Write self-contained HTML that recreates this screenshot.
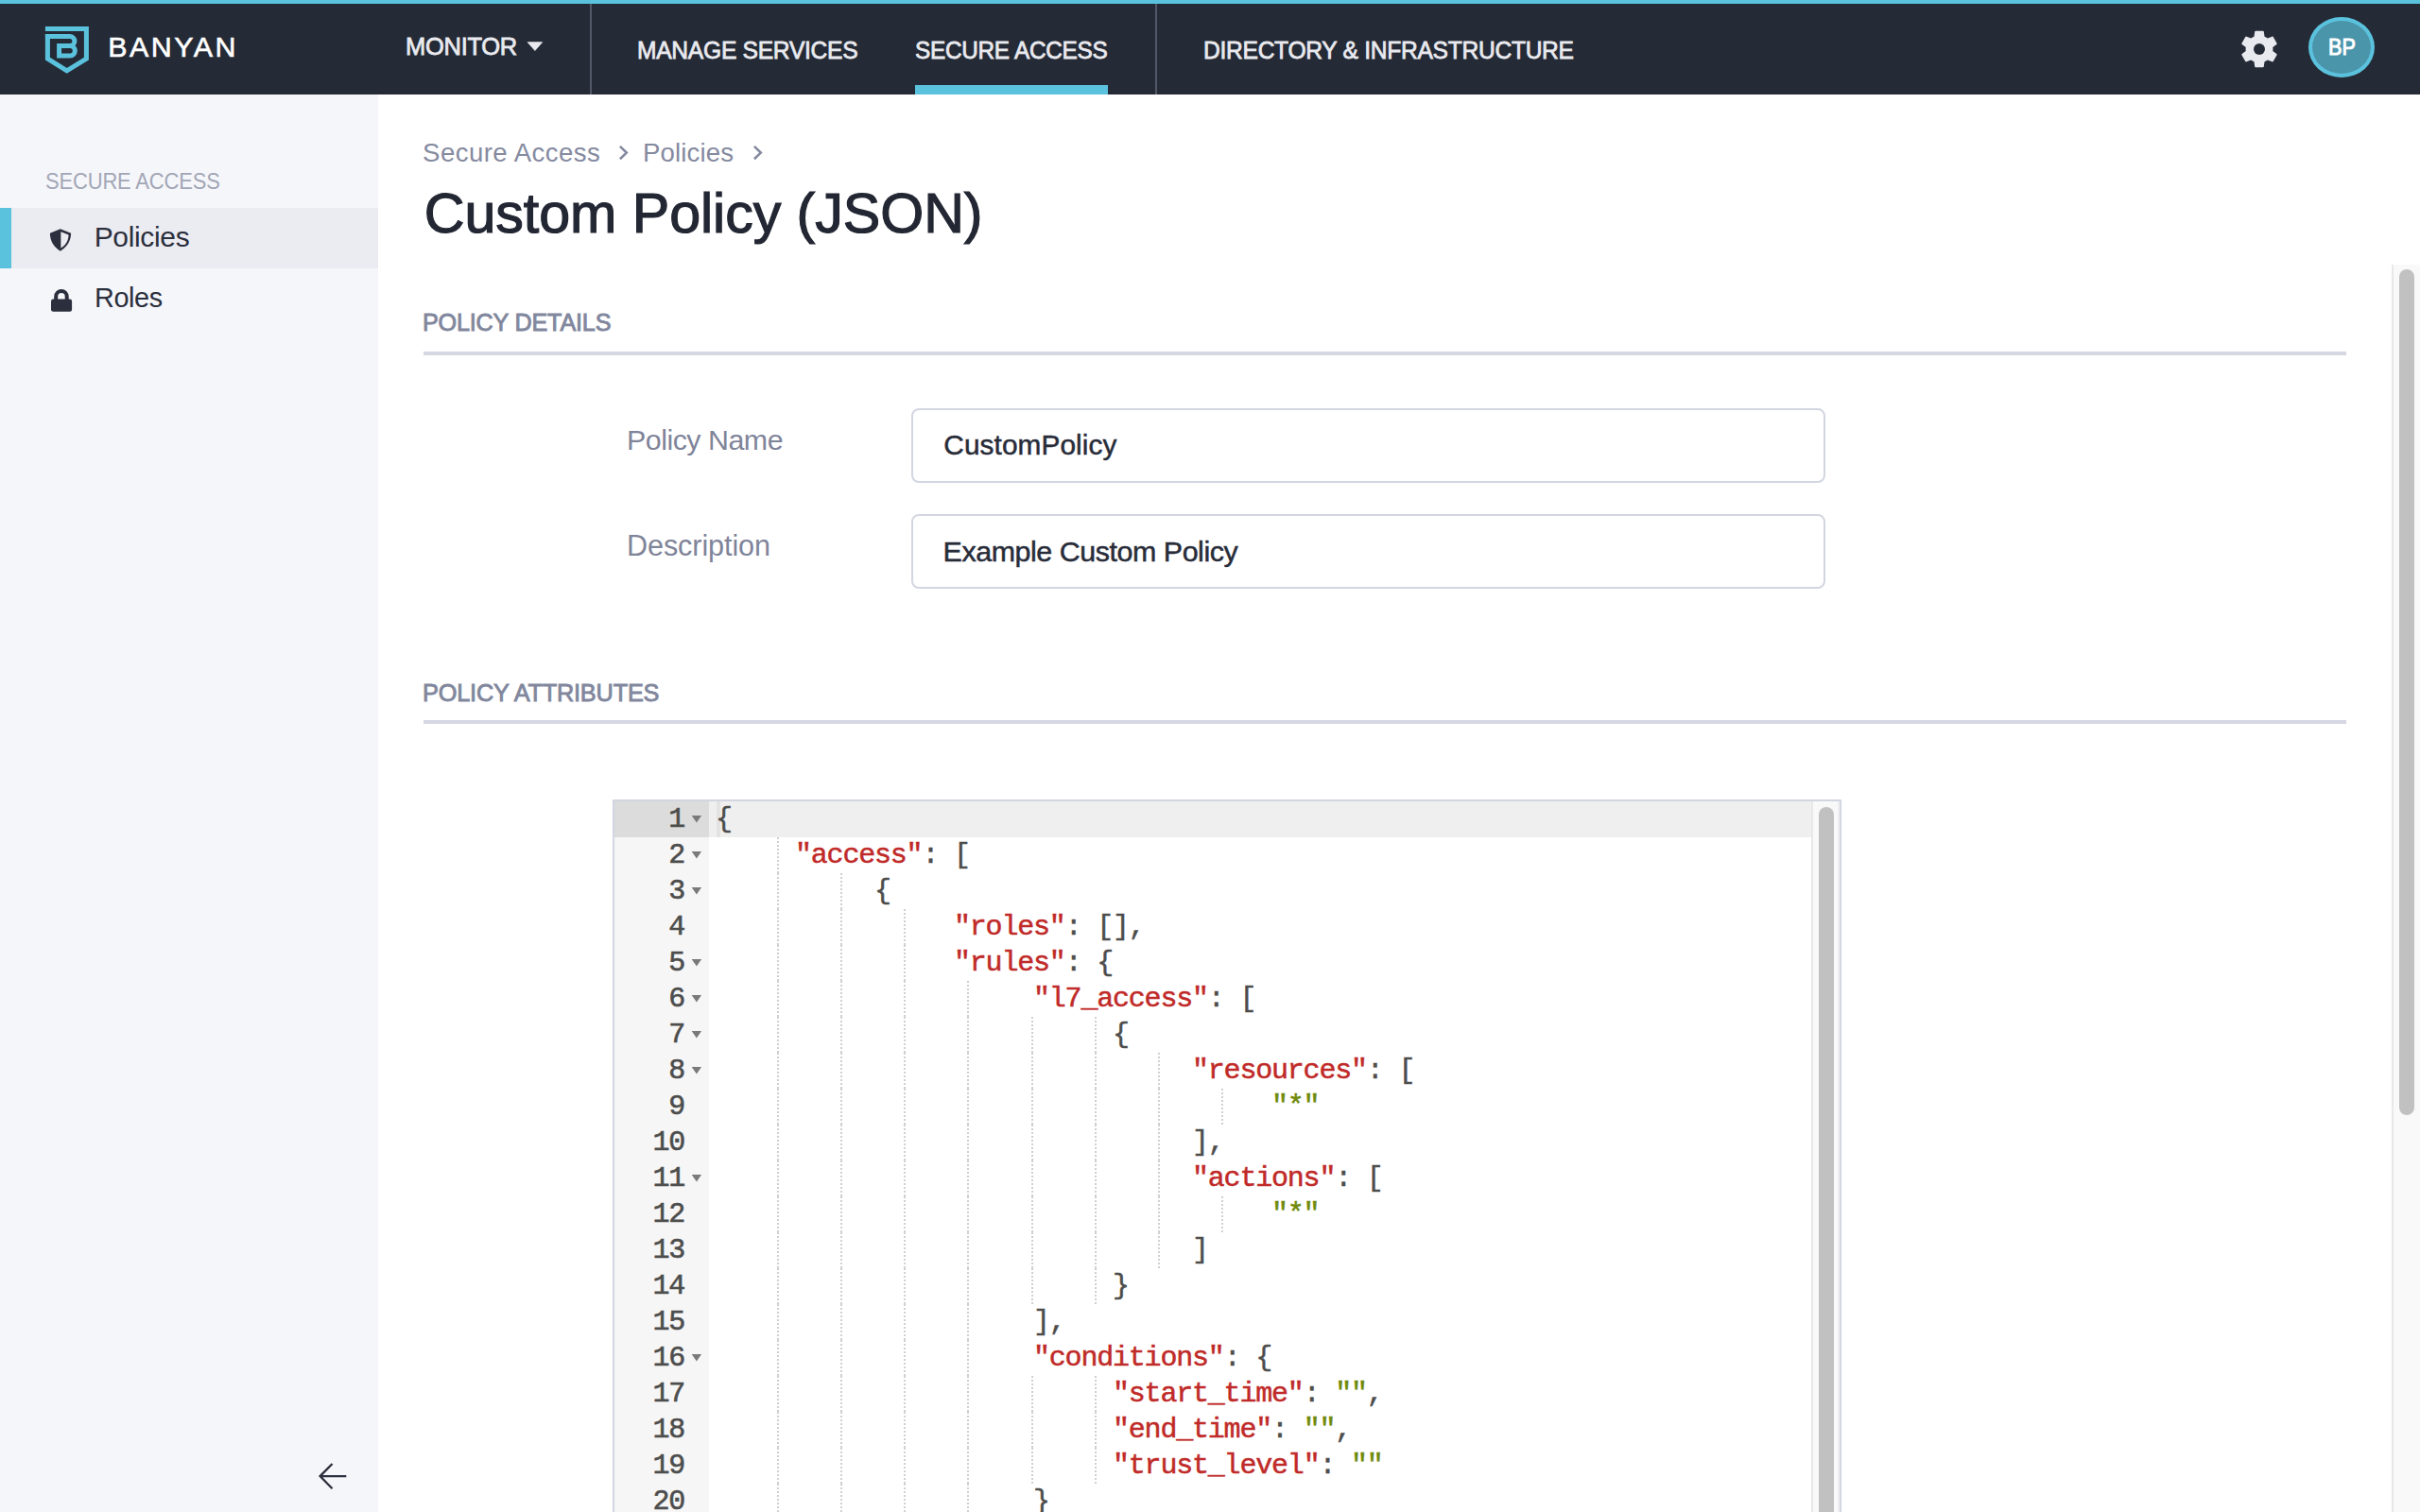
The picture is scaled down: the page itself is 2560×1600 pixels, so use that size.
<!DOCTYPE html><html><head><meta charset="utf-8"><style>
html,body{margin:0;padding:0;width:2560px;height:1600px;overflow:hidden;background:#fff}
.t{position:absolute;white-space:pre;font-family:"Liberation Sans",sans-serif}
.cl{position:absolute;height:38px;line-height:38px;white-space:pre;font-family:"Liberation Mono",monospace;font-size:30px;letter-spacing:-1.2px;color:#4d4d4c;-webkit-text-stroke:0.5px currentColor}
.gn{position:absolute;left:650px;width:74px;text-align:right;height:38px;line-height:38px;font-family:"Liberation Mono",monospace;font-size:30px;letter-spacing:-1.2px;color:#4d4d4c;-webkit-text-stroke:0.6px #4d4d4c}
.g{position:absolute;width:2px;height:38px;background:repeating-linear-gradient(to bottom,#d0d0d0 0,#d0d0d0 2px,transparent 2px,transparent 4px)}
</style></head><body>
<div style="position:absolute;left:0px;top:0px;width:2560px;height:4px;background:#5bc2de;"></div>
<div style="position:absolute;left:0px;top:4px;width:2560px;height:96px;background:#252b36;"></div>
<div style="position:absolute;left:624px;top:4px;width:2px;height:96px;background:#525868;"></div>
<div style="position:absolute;left:1222px;top:4px;width:2px;height:96px;background:#525868;"></div>
<div style="position:absolute;left:968px;top:90px;width:204px;height:10px;background:#5bc2de;"></div>
<svg style="position:absolute;left:0;top:0" width="120" height="100" viewBox="0 0 120 100">
<path d="M47.9,30.4 H91.4 V62.2 L70.7,74.9 L50.4,62.2 V35.9" fill="none" stroke="#5bc2de" stroke-width="5" stroke-miterlimit="10"/>
<path d="M47.9,38.55 H73.9 A5,5 0 0 1 73.9,48.55 H62.6 M62.6,48.55 H74.1 A5.175,5.175 0 0 1 74.1,58.9 H62.6 Z" fill="none" stroke="#5bc2de" stroke-width="5" stroke-miterlimit="10"/>
</svg>
<div class="t" style="left:114.2px;top:33.77px;font-size:30.4px;line-height:30.4px;font-weight:400;letter-spacing:2.5px;color:#ffffff;-webkit-text-stroke:0.6px #ffffff;">BANYAN</div>
<div class="t" style="left:428.7px;top:35.58px;font-size:26.7px;line-height:26.7px;font-weight:400;letter-spacing:-0.3px;color:#e9eaef;-webkit-text-stroke:0.8px #e9eaef;transform:scaleX(0.9555);transform-origin:0 0;">MONITOR</div>
<div class="t" style="left:674.3px;top:39.58px;font-size:26.6px;line-height:26.6px;font-weight:400;letter-spacing:-0.3px;color:#e9eaef;-webkit-text-stroke:0.8px #e9eaef;transform:scaleX(0.9256);transform-origin:0 0;">MANAGE SERVICES</div>
<div class="t" style="left:968.1px;top:39.73px;font-size:26.6px;line-height:26.6px;font-weight:400;letter-spacing:-0.3px;color:#e9eaef;-webkit-text-stroke:0.8px #e9eaef;transform:scaleX(0.9155);transform-origin:0 0;">SECURE ACCESS</div>
<div class="t" style="left:1273.3px;top:39.73px;font-size:26.6px;line-height:26.6px;font-weight:400;letter-spacing:-0.3px;color:#e9eaef;-webkit-text-stroke:0.8px #e9eaef;transform:scaleX(0.9246);transform-origin:0 0;">DIRECTORY &amp; INFRASTRUCTURE</div>
<svg style="position:absolute;left:556px;top:42px" width="20" height="14" viewBox="0 0 20 14"><path d="M2.2,2.7 H17.6 L9.9,11.5 Z" fill="#e9eaef" stroke="#e9eaef" stroke-width="0.8" stroke-linejoin="round"/></svg>
<svg style="position:absolute;left:2366px;top:28px" width="48" height="48" viewBox="0 0 24 24"><path fill="#e9eaef" d="M19.14,12.94c0.04-0.3,0.06-0.61,0.06-0.94c0-0.32-0.02-0.64-0.07-0.94l2.03-1.58c0.18-0.14,0.23-0.41,0.12-0.61 l-1.92-3.32c-0.12-0.22-0.37-0.29-0.59-0.22l-2.39,0.96c-0.5-0.38-1.03-0.7-1.62-0.94L14.4,2.81c-0.04-0.24-0.24-0.41-0.48-0.41 h-3.84c-0.24,0-0.43,0.17-0.47,0.41L9.25,5.35C8.66,5.59,8.12,5.92,7.63,6.29L5.24,5.33c-0.22-0.08-0.47,0-0.59,0.22L2.74,8.87 C2.62,9.08,2.66,9.34,2.86,9.48l2.03,1.58C4.84,11.36,4.8,11.69,4.8,12s0.02,0.64,0.07,0.94l-2.03,1.58 c-0.18,0.14-0.23,0.41-0.12,0.61l1.92,3.32c0.12,0.22,0.37,0.29,0.59,0.22l2.39-0.96c0.5,0.38,1.03,0.7,1.62,0.94l0.36,2.54 c0.05,0.24,0.24,0.41,0.48,0.41h3.84c0.24,0,0.44-0.17,0.47-0.41l0.36-2.54c0.59-0.24,1.13-0.56,1.62-0.94l2.39,0.96 c0.22,0.08,0.47,0,0.59-0.22l1.92-3.32c0.12-0.22,0.07-0.47-0.12-0.61L19.14,12.94z"/><circle cx="12" cy="12" r="3" fill="#252b36"/></svg>
<div style="position:absolute;left:2442px;top:18px;width:62px;height:56px;border:4px solid #5bc2de;border-radius:50%;background:#4b95ab"></div>
<div class="t" style="left:2462.7px;top:38.44px;font-size:24.4px;line-height:24.4px;font-weight:400;letter-spacing:0.0px;color:#ffffff;-webkit-text-stroke:1.0px #ffffff;transform:scaleX(0.8874);transform-origin:0 0;">BP</div>
<div style="position:absolute;left:0px;top:100px;width:400px;height:1500px;background:#f5f6fa;"></div>
<div class="t" style="left:47.9px;top:180.89px;font-size:23.5px;line-height:23.5px;font-weight:400;letter-spacing:-0.2px;color:#a2a6b6;transform:scaleX(0.9364);transform-origin:0 0;">SECURE ACCESS</div>
<div style="position:absolute;left:0px;top:220px;width:400px;height:64px;background:#ebecf1;"></div>
<div style="position:absolute;left:0px;top:220px;width:12px;height:64px;background:#5bc2de;"></div>
<svg style="position:absolute;left:40px;top:230px" width="50" height="110" viewBox="40 230 50 110">
<path d="M63.8,242.2 L52.9,246.7 C52.9,254.5 56.5,261.5 63.8,265.7 C71.1,261.5 75.1,254.5 75.1,246.7 Z" fill="#2b2f3d"/>
<path d="M64.4,245.2 L72.6,248.5 C72.3,254.5 69.8,259.3 64.4,262.6 Z" fill="#ebecf1"/>
<rect x="54" y="316.6" width="22.1" height="13.2" rx="2.3" fill="#2b2f3d"/>
<path d="M59.2,317.5 V313.75 A5.75,5.75 0 0 1 70.7,313.75 V317.5" fill="none" stroke="#2b2f3d" stroke-width="4"/>
</svg>
<div class="t" style="left:99.7px;top:236.38px;font-size:30.0px;line-height:30.0px;font-weight:400;letter-spacing:-0.342px;color:#2b2f3d;">Policies</div>
<div class="t" style="left:99.7px;top:300.43px;font-size:30.0px;line-height:30.0px;font-weight:400;letter-spacing:-0.4px;color:#2b2f3d;transform:scaleX(0.9612);transform-origin:0 0;">Roles</div>
<svg style="position:absolute;left:330px;top:1540px" width="44" height="44" viewBox="330 1540 44 44"><path d="M366.3,1562.1 H339 M351.5,1549 L338.6,1562.1 L351.5,1575.2" fill="none" stroke="#2b2f3d" stroke-width="2.3" stroke-linecap="butt"/></svg>
<div class="t" style="left:447.1px;top:148.43px;font-size:27.6px;line-height:27.6px;font-weight:400;letter-spacing:0.425px;color:#858a9f;">Secure Access</div>
<div class="t" style="left:679.9px;top:148.43px;font-size:27.6px;line-height:27.6px;font-weight:400;letter-spacing:0.157px;color:#858a9f;">Policies</div>
<svg style="position:absolute;left:652px;top:150px" width="16" height="24" viewBox="652 150 16 24"><path d="M655.9,154.9 L662.8,161.6 L655.9,168.3" fill="none" stroke="#858a9f" stroke-width="2.6"/></svg>
<svg style="position:absolute;left:794.1px;top:150px" width="16" height="24" viewBox="794.1 150 16 24"><path d="M798.0,154.9 L804.9,161.6 L798.0,168.3" fill="none" stroke="#858a9f" stroke-width="2.6"/></svg>
<div class="t" style="left:448.8px;top:195.75px;font-size:59.2px;line-height:59.2px;font-weight:400;letter-spacing:-0.063px;color:#232733;-webkit-text-stroke:1.2px #232733;">Custom Policy (JSON)</div>
<div class="t" style="left:447.0px;top:327.68px;font-size:26.5px;line-height:26.5px;font-weight:400;letter-spacing:-0.2px;color:#81879d;-webkit-text-stroke:0.9px #81879d;transform:scaleX(0.9498);transform-origin:0 0;">POLICY DETAILS</div>
<div style="position:absolute;left:448px;top:372px;width:2034px;height:4px;background:#d5d8e3;"></div>
<div class="t" style="left:663.0px;top:450.27px;font-size:30.4px;line-height:30.4px;font-weight:400;letter-spacing:-0.5px;color:#7f8499;">Policy Name</div>
<div class="t" style="left:663.0px;top:562.07px;font-size:30.6px;line-height:30.6px;font-weight:400;letter-spacing:-0.1px;color:#7f8499;">Description</div>
<div style="position:absolute;left:964px;top:432px;width:967px;height:79px;background:#fff;box-sizing:border-box;border:2px solid #d3d6e1;border-radius:8px;"></div>
<div style="position:absolute;left:964px;top:544px;width:967px;height:79px;background:#fff;box-sizing:border-box;border:2px solid #d3d6e1;border-radius:8px;"></div>
<div class="t" style="left:998.3px;top:456.48px;font-size:29.8px;line-height:29.8px;font-weight:400;letter-spacing:0.081px;color:#282c39;-webkit-text-stroke:0.5px #282c39;">CustomPolicy</div>
<div class="t" style="left:997.6px;top:568.17px;font-size:30.4px;line-height:30.4px;font-weight:400;letter-spacing:-0.44px;color:#282c39;-webkit-text-stroke:0.5px #282c39;">Example Custom Policy</div>
<div class="t" style="left:446.6px;top:719.78px;font-size:26.5px;line-height:26.5px;font-weight:400;letter-spacing:-0.2px;color:#81879d;-webkit-text-stroke:0.9px #81879d;transform:scaleX(0.9546);transform-origin:0 0;">POLICY ATTRIBUTES</div>
<div style="position:absolute;left:448px;top:762px;width:2034px;height:4px;background:#d5d8e3;"></div>
<div style="position:absolute;left:2530px;top:280px;width:30px;height:1320px;background:#f9f9f9;box-sizing:border-box;border-left:2px solid #e8e8e8;"></div>
<div style="position:absolute;left:2538px;top:285px;width:16px;height:895px;background:#c1c1c1;border-radius:8px;"></div>
<div style="position:absolute;left:648px;top:846px;width:1300px;height:800px;background:#fff;box-sizing:border-box;border:2px solid #d3d6e1;"></div>
<div style="position:absolute;left:650px;top:848px;width:100px;height:760px;background:#f6f6f6;"></div>
<div style="position:absolute;left:650px;top:848px;width:100px;height:38px;background:#dcdcdc;"></div>
<div style="position:absolute;left:750px;top:848px;width:1166px;height:38px;background:#efefef;"></div>
<div style="position:absolute;left:758px;top:848px;width:4px;height:38px;background:#e3e3e3;"></div>
<div style="position:absolute;left:1916px;top:848px;width:30px;height:760px;background:#f9f9f9;box-sizing:border-box;border-left:2px solid #e8e8e8;border-right:2px solid #f0f0f0;"></div>
<div style="position:absolute;left:1924px;top:854px;width:16px;height:760px;background:#c1c1c1;border-radius:8px;"></div>
<div class="cl" style="left:757.0px;top:848px"><span style="color:#4d4d4c">{</span></div>
<div class="gn" style="top:848px">1</div>
<svg style="position:absolute;left:731px;top:862px" width="12" height="10" viewBox="0 0 12 10"><path d="M0.7,1 H11.1 L5.9,8.6 Z" fill="#7a7a7a"/></svg>
<div class="g" style="left:821.8px;top:886px"></div>
<div class="cl" style="left:841.0px;top:886px"><span style="color:#c02a28">"access"</span><span style="color:#4d4d4c">: [</span></div>
<div class="gn" style="top:886px">2</div>
<svg style="position:absolute;left:731px;top:900px" width="12" height="10" viewBox="0 0 12 10"><path d="M0.7,1 H11.1 L5.9,8.6 Z" fill="#7a7a7a"/></svg>
<div class="g" style="left:821.8px;top:924px"></div>
<div class="g" style="left:889.0px;top:924px"></div>
<div class="cl" style="left:925.0px;top:924px"><span style="color:#4d4d4c">{</span></div>
<div class="gn" style="top:924px">3</div>
<svg style="position:absolute;left:731px;top:938px" width="12" height="10" viewBox="0 0 12 10"><path d="M0.7,1 H11.1 L5.9,8.6 Z" fill="#7a7a7a"/></svg>
<div class="g" style="left:821.8px;top:962px"></div>
<div class="g" style="left:889.0px;top:962px"></div>
<div class="g" style="left:956.2px;top:962px"></div>
<div class="cl" style="left:1009.0px;top:962px"><span style="color:#c02a28">"roles"</span><span style="color:#4d4d4c">: [],</span></div>
<div class="gn" style="top:962px">4</div>
<div class="g" style="left:821.8px;top:1000px"></div>
<div class="g" style="left:889.0px;top:1000px"></div>
<div class="g" style="left:956.2px;top:1000px"></div>
<div class="cl" style="left:1009.0px;top:1000px"><span style="color:#c02a28">"rules"</span><span style="color:#4d4d4c">: {</span></div>
<div class="gn" style="top:1000px">5</div>
<svg style="position:absolute;left:731px;top:1014px" width="12" height="10" viewBox="0 0 12 10"><path d="M0.7,1 H11.1 L5.9,8.6 Z" fill="#7a7a7a"/></svg>
<div class="g" style="left:821.8px;top:1038px"></div>
<div class="g" style="left:889.0px;top:1038px"></div>
<div class="g" style="left:956.2px;top:1038px"></div>
<div class="g" style="left:1023.4px;top:1038px"></div>
<div class="cl" style="left:1093.0px;top:1038px"><span style="color:#c02a28">"l7_access"</span><span style="color:#4d4d4c">: [</span></div>
<div class="gn" style="top:1038px">6</div>
<svg style="position:absolute;left:731px;top:1052px" width="12" height="10" viewBox="0 0 12 10"><path d="M0.7,1 H11.1 L5.9,8.6 Z" fill="#7a7a7a"/></svg>
<div class="g" style="left:821.8px;top:1076px"></div>
<div class="g" style="left:889.0px;top:1076px"></div>
<div class="g" style="left:956.2px;top:1076px"></div>
<div class="g" style="left:1023.4px;top:1076px"></div>
<div class="g" style="left:1090.6px;top:1076px"></div>
<div class="g" style="left:1157.8px;top:1076px"></div>
<div class="cl" style="left:1177.0px;top:1076px"><span style="color:#4d4d4c">{</span></div>
<div class="gn" style="top:1076px">7</div>
<svg style="position:absolute;left:731px;top:1090px" width="12" height="10" viewBox="0 0 12 10"><path d="M0.7,1 H11.1 L5.9,8.6 Z" fill="#7a7a7a"/></svg>
<div class="g" style="left:821.8px;top:1114px"></div>
<div class="g" style="left:889.0px;top:1114px"></div>
<div class="g" style="left:956.2px;top:1114px"></div>
<div class="g" style="left:1023.4px;top:1114px"></div>
<div class="g" style="left:1090.6px;top:1114px"></div>
<div class="g" style="left:1157.8px;top:1114px"></div>
<div class="g" style="left:1225.0px;top:1114px"></div>
<div class="cl" style="left:1261.0px;top:1114px"><span style="color:#c02a28">"resources"</span><span style="color:#4d4d4c">: [</span></div>
<div class="gn" style="top:1114px">8</div>
<svg style="position:absolute;left:731px;top:1128px" width="12" height="10" viewBox="0 0 12 10"><path d="M0.7,1 H11.1 L5.9,8.6 Z" fill="#7a7a7a"/></svg>
<div class="g" style="left:821.8px;top:1152px"></div>
<div class="g" style="left:889.0px;top:1152px"></div>
<div class="g" style="left:956.2px;top:1152px"></div>
<div class="g" style="left:1023.4px;top:1152px"></div>
<div class="g" style="left:1090.6px;top:1152px"></div>
<div class="g" style="left:1157.8px;top:1152px"></div>
<div class="g" style="left:1225.0px;top:1152px"></div>
<div class="g" style="left:1292.2px;top:1152px"></div>
<div class="cl" style="left:1345.0px;top:1152px"><span style="color:#6f8a0c">"*"</span></div>
<div class="gn" style="top:1152px">9</div>
<div class="g" style="left:821.8px;top:1190px"></div>
<div class="g" style="left:889.0px;top:1190px"></div>
<div class="g" style="left:956.2px;top:1190px"></div>
<div class="g" style="left:1023.4px;top:1190px"></div>
<div class="g" style="left:1090.6px;top:1190px"></div>
<div class="g" style="left:1157.8px;top:1190px"></div>
<div class="g" style="left:1225.0px;top:1190px"></div>
<div class="cl" style="left:1261.0px;top:1190px"><span style="color:#4d4d4c">],</span></div>
<div class="gn" style="top:1190px">10</div>
<div class="g" style="left:821.8px;top:1228px"></div>
<div class="g" style="left:889.0px;top:1228px"></div>
<div class="g" style="left:956.2px;top:1228px"></div>
<div class="g" style="left:1023.4px;top:1228px"></div>
<div class="g" style="left:1090.6px;top:1228px"></div>
<div class="g" style="left:1157.8px;top:1228px"></div>
<div class="g" style="left:1225.0px;top:1228px"></div>
<div class="cl" style="left:1261.0px;top:1228px"><span style="color:#c02a28">"actions"</span><span style="color:#4d4d4c">: [</span></div>
<div class="gn" style="top:1228px">11</div>
<svg style="position:absolute;left:731px;top:1242px" width="12" height="10" viewBox="0 0 12 10"><path d="M0.7,1 H11.1 L5.9,8.6 Z" fill="#7a7a7a"/></svg>
<div class="g" style="left:821.8px;top:1266px"></div>
<div class="g" style="left:889.0px;top:1266px"></div>
<div class="g" style="left:956.2px;top:1266px"></div>
<div class="g" style="left:1023.4px;top:1266px"></div>
<div class="g" style="left:1090.6px;top:1266px"></div>
<div class="g" style="left:1157.8px;top:1266px"></div>
<div class="g" style="left:1225.0px;top:1266px"></div>
<div class="g" style="left:1292.2px;top:1266px"></div>
<div class="cl" style="left:1345.0px;top:1266px"><span style="color:#6f8a0c">"*"</span></div>
<div class="gn" style="top:1266px">12</div>
<div class="g" style="left:821.8px;top:1304px"></div>
<div class="g" style="left:889.0px;top:1304px"></div>
<div class="g" style="left:956.2px;top:1304px"></div>
<div class="g" style="left:1023.4px;top:1304px"></div>
<div class="g" style="left:1090.6px;top:1304px"></div>
<div class="g" style="left:1157.8px;top:1304px"></div>
<div class="g" style="left:1225.0px;top:1304px"></div>
<div class="cl" style="left:1261.0px;top:1304px"><span style="color:#4d4d4c">]</span></div>
<div class="gn" style="top:1304px">13</div>
<div class="g" style="left:821.8px;top:1342px"></div>
<div class="g" style="left:889.0px;top:1342px"></div>
<div class="g" style="left:956.2px;top:1342px"></div>
<div class="g" style="left:1023.4px;top:1342px"></div>
<div class="g" style="left:1090.6px;top:1342px"></div>
<div class="g" style="left:1157.8px;top:1342px"></div>
<div class="cl" style="left:1177.0px;top:1342px"><span style="color:#4d4d4c">}</span></div>
<div class="gn" style="top:1342px">14</div>
<div class="g" style="left:821.8px;top:1380px"></div>
<div class="g" style="left:889.0px;top:1380px"></div>
<div class="g" style="left:956.2px;top:1380px"></div>
<div class="g" style="left:1023.4px;top:1380px"></div>
<div class="cl" style="left:1093.0px;top:1380px"><span style="color:#4d4d4c">],</span></div>
<div class="gn" style="top:1380px">15</div>
<div class="g" style="left:821.8px;top:1418px"></div>
<div class="g" style="left:889.0px;top:1418px"></div>
<div class="g" style="left:956.2px;top:1418px"></div>
<div class="g" style="left:1023.4px;top:1418px"></div>
<div class="cl" style="left:1093.0px;top:1418px"><span style="color:#c02a28">"conditions"</span><span style="color:#4d4d4c">: {</span></div>
<div class="gn" style="top:1418px">16</div>
<svg style="position:absolute;left:731px;top:1432px" width="12" height="10" viewBox="0 0 12 10"><path d="M0.7,1 H11.1 L5.9,8.6 Z" fill="#7a7a7a"/></svg>
<div class="g" style="left:821.8px;top:1456px"></div>
<div class="g" style="left:889.0px;top:1456px"></div>
<div class="g" style="left:956.2px;top:1456px"></div>
<div class="g" style="left:1023.4px;top:1456px"></div>
<div class="g" style="left:1090.6px;top:1456px"></div>
<div class="g" style="left:1157.8px;top:1456px"></div>
<div class="cl" style="left:1177.0px;top:1456px"><span style="color:#c02a28">"start_time"</span><span style="color:#4d4d4c">: </span><span style="color:#6f8a0c">""</span><span style="color:#4d4d4c">,</span></div>
<div class="gn" style="top:1456px">17</div>
<div class="g" style="left:821.8px;top:1494px"></div>
<div class="g" style="left:889.0px;top:1494px"></div>
<div class="g" style="left:956.2px;top:1494px"></div>
<div class="g" style="left:1023.4px;top:1494px"></div>
<div class="g" style="left:1090.6px;top:1494px"></div>
<div class="g" style="left:1157.8px;top:1494px"></div>
<div class="cl" style="left:1177.0px;top:1494px"><span style="color:#c02a28">"end_time"</span><span style="color:#4d4d4c">: </span><span style="color:#6f8a0c">""</span><span style="color:#4d4d4c">,</span></div>
<div class="gn" style="top:1494px">18</div>
<div class="g" style="left:821.8px;top:1532px"></div>
<div class="g" style="left:889.0px;top:1532px"></div>
<div class="g" style="left:956.2px;top:1532px"></div>
<div class="g" style="left:1023.4px;top:1532px"></div>
<div class="g" style="left:1090.6px;top:1532px"></div>
<div class="g" style="left:1157.8px;top:1532px"></div>
<div class="cl" style="left:1177.0px;top:1532px"><span style="color:#c02a28">"trust_level"</span><span style="color:#4d4d4c">: </span><span style="color:#6f8a0c">""</span></div>
<div class="gn" style="top:1532px">19</div>
<div class="g" style="left:821.8px;top:1570px"></div>
<div class="g" style="left:889.0px;top:1570px"></div>
<div class="g" style="left:956.2px;top:1570px"></div>
<div class="g" style="left:1023.4px;top:1570px"></div>
<div class="cl" style="left:1093.0px;top:1570px"><span style="color:#4d4d4c">}</span></div>
<div class="gn" style="top:1570px">20</div>
</body></html>
